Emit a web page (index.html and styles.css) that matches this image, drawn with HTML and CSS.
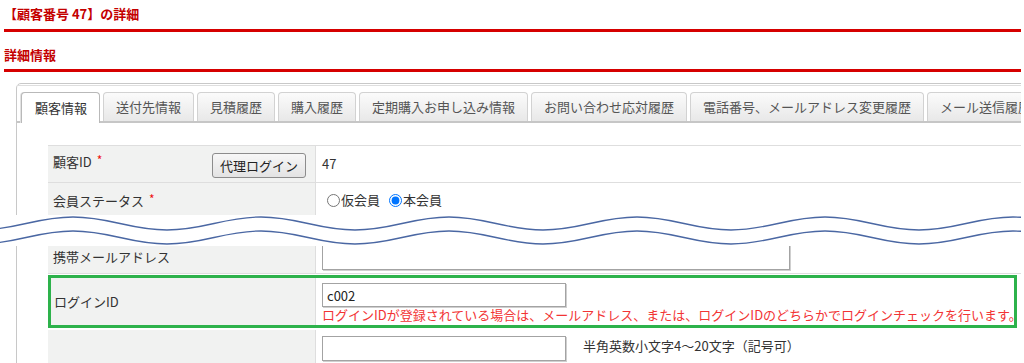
FILE: index.html
```html
<!DOCTYPE html>
<html lang="ja">
<head>
  <meta charset="UTF-8" />
  <title>顧客詳細</title>
  <link rel="stylesheet" href="styles.css">
</head>
<body>
  <div class="page">
    <h2 class="heading">【顧客番号 47】の詳細</h2>
    <h3 class="heading sub">詳細情報</h3>

    <div class="panel">
      <ul class="tabs">
        <li class="tab active">顧客情報</li>
        <li class="tab">送付先情報</li>
        <li class="tab">見積履歴</li>
        <li class="tab">購入履歴</li>
        <li class="tab">定期購入お申し込み情報</li>
        <li class="tab">お問い合わせ応対履歴</li>
        <li class="tab">電話番号、メールアドレス変更履歴</li>
        <li class="tab">メール送信履歴</li>
      </ul>

      <div class="form">
        <div class="row row-id">
          <div class="label"><span class="name">顧客ID<span class="req">*</span></span><button class="btn" type="button">代理ログイン</button></div>
          <div class="value">47</div>
        </div>
        <div class="row row-status">
          <div class="label"><span class="name">会員ステータス<span class="req">*</span></span></div>
          <div class="value">
            <label class="radio"><input type="radio" name="status"> 仮会員</label>
            <label class="radio"><input type="radio" name="status" checked> 本会員</label>
          </div>
        </div>
        <div class="row row-hidden">
          <div class="label"><span class="name">メールアドレス</span></div>
          <div class="value"></div>
        </div>
        <div class="row row-mobile">
          <div class="label"><span class="name">携帯メールアドレス</span></div>
          <div class="value"><input class="text wide" type="text"></div>
        </div>
        <div class="row row-login">
          <div class="label"><span class="name">ログインID</span></div>
          <div class="value">
            <input class="text short" type="text" value="c002">
            <div class="note">ログインIDが登録されている場合は、メールアドレス、または、ログインIDのどちらかでログインチェックを行います。</div>
          </div>
        </div>
        <div class="row row-pass">
          <div class="label"><span class="name">パスワード<span class="req">*</span></span></div>
          <div class="value">
            <div class="line"><input class="text short tall" type="password"><span class="hint">半角英数小文字4～20文字（記号可）</span></div>
            <div class="line"><input class="text short tall" type="password"></div>
          </div>
        </div>
      </div>
    </div>

    <!-- 省略マーク -->
    <svg class="cut" width="1021" height="31" viewBox="0 0 1021 31">
      <rect x="0" y="0" width="1021" height="31" fill="#fff"/>
      <path class="wave" d="M-21 15 C16 15 36 2 73 2 S130 15 167 15 S224 2 261 2 S318 15 355 15 S412 2 449 2 S506 15 543 15 S600 2 637 2 S694 15 731 15 S788 2 825 2 S882 15 919 15 S976 2 1013 2 S1070 15 1107 15"/>
      <path class="wave" d="M-21 29 C16 29 36 16 73 16 S130 29 167 29 S224 16 261 16 S318 29 355 29 S412 16 449 16 S506 29 543 29 S600 16 637 16 S694 29 731 29 S788 16 825 16 S882 29 919 29 S976 16 1013 16 S1070 29 1107 29"/>
    </svg>
  </div>
</body>
</html>
```

FILE: styles.css
```css
body { margin: 0; font-family: "Noto Sans CJK JP", "Noto Sans", sans-serif; font-size: 13px; color: #333; background: #fff; }
.page { position: relative; width: 1021px; height: 363px; overflow: hidden; padding-left: 4px; box-sizing: border-box; }

.heading { margin: 5px 0 0; padding: 0 0 6px; font-size: 13px; line-height: 18px; font-weight: bold; color: #c40000; border-bottom: 3px solid #d60000; }
.heading.sub { margin-top: 14px; padding-bottom: 5px; }

.panel { margin: 11px 0 0 12px; width: 1100px; padding-top: 1px; border: 1px solid #c8c8c8; border-radius: 5px; }

.tabs { display: flex; align-items: flex-start; gap: 3px; margin: 0; padding: 6px 0 0 4px; list-style: none; border-top: 1px solid #dedede; border-bottom: 2px solid #c6c6c6; }
.tab { flex: none; height: 29px; box-sizing: border-box; padding: 0 12px; line-height: 28px; color: #555; white-space: nowrap; border: 1px solid #d2d2d2; border-bottom: none; border-radius: 4px 4px 0 0; background: linear-gradient(#fbfbfb, #e8e8e8); }
.tab.active { height: 31px; margin-bottom: -2px; padding: 0 12px 0 13px; line-height: 29px; color: #333; background: #fff; border-color: #b9b9b9; box-shadow: -1px 0 0 #e2e2e2; }

.form { width: 1000px; margin: 22px 0 0 31px; border-top: 1px solid #dedede; }
.row { display: grid; grid-template-columns: 268px 1fr; border-bottom: 1px solid #dedede; }
.label { display: flex; align-items: center; padding: 0 9px 0 5px; background: #f1f2f1; border-right: 1px solid #dedede; line-height: 18px; }
.name { white-space: nowrap; }
.value { display: flex; align-items: center; padding: 0 6px; line-height: 18px; }
.req { color: #ee1111; font-size: 12px; margin-left: 5px; vertical-align: 2px; }

.row-id { height: 36px; }
.row-id .label { align-items: flex-start; padding-top: 5px; }
.btn { margin: 2px 0 0 auto; height: 25px; padding: 0 7px; font: inherit; color: #222; border: 1px solid #8c8c8c; border-radius: 3px; background: linear-gradient(#f7f7f7, #e3e3e3); }

.row-status { height: 33px; }
.radio { display: inline-flex; align-items: center; margin-right: 4px; }
.radio input { margin: 1px 1px 0 5px; width: 13px; height: 13px; }

.row-hidden { height: 22px; }
.row-mobile { height: 33px; }

.text { box-sizing: border-box; height: 24px; padding: 0 4px; font: inherit; color: #222; border: 1px solid #a3a3a3; box-shadow: 1px 1px 0 #cfcfcf; background: #fff; }
.text.wide { width: 468px; height: 26px; }
.text.short { width: 244px; }
.text.tall { height: 25px; }

.row-login { width: 969px; box-sizing: border-box; margin: 1px 0 2px; grid-template-columns: 265px 1fr; border: 3px solid #2db24b; }
.row-login .label { padding-left: 3px; }
.row-login .value { flex-direction: column; align-items: flex-start; padding: 5px 6px 2px; }
.note { color: #f23434; white-space: nowrap; line-height: 16px; }

.row-pass .value { flex-direction: column; align-items: flex-start; padding: 6px 6px 28px; gap: 5px; }
.line { display: flex; align-items: flex-start; }
.hint { margin: 1px 0 0 17px; }

.cut { position: absolute; top: 215px; left: 0; display: block; }
.wave { fill: none; stroke: #4a67a3; stroke-width: 1.3; }
```
